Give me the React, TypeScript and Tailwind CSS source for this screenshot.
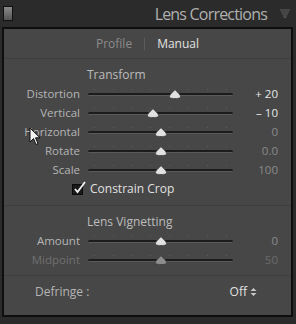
import React from "react";

const font = { fontFamily: '"Open Sans", "Noto Sans", sans-serif' };

function Thumb({ dim }: { dim?: boolean }) {
  return (
    <svg width="12" height="10" viewBox="0 0 12 10" className="block">
      <path
        d="M6 0.5 C7 2.5 11.5 5 11.5 7.5 C11.5 9 10 9.5 6 9.5 C2 9.5 0.5 9 0.5 7.5 C0.5 5 5 2.5 6 0.5 Z"
        fill={dim ? "#8e8e8e" : "#e2e2e2"}
        stroke={dim ? "#3a3a3a" : "#333"}
        strokeWidth="0.7"
      />
    </svg>
  );
}

function Slider({ pct, dim }: { pct: number; dim?: boolean }) {
  const ticks = [4, 17, 30, 43, 56, 69, 82, 95];
  return (
    <div className="relative w-[145px] h-[12px]">
      {ticks.map((t) => (
        <div
          key={t}
          className="absolute top-[1px] w-[1px] h-[1px] bg-[#5e5e5e]"
          style={{ left: `${t}%` }}
        />
      ))}
      <div className="absolute left-0 right-0 top-[5px] h-[3px] rounded-full bg-[#1c1c1c] border-b border-[#5a5a5a]" />
      <div className="absolute top-[1px]" style={{ left: `calc(${pct}% - 6px)` }}>
        <Thumb dim={dim} />
      </div>
    </div>
  );
}

function Row({
  label,
  pct,
  value,
  valueColor,
  labelColor = "text-[#b5b5b5]",
  dim,
}: {
  label: string;
  pct: number;
  value: string;
  valueColor: string;
  labelColor?: string;
  dim?: boolean;
}) {
  return (
    <div className="flex items-center h-[19px]">
      <div className={`w-[76px] text-right text-[11.5px] ${labelColor}`}>{label}</div>
      <div className="ml-[8px]">
        <Slider pct={pct} dim={dim} />
      </div>
      <div className={`w-[45px] text-right text-[11.5px] ${valueColor}`}>{value}</div>
    </div>
  );
}

export default function App() {
  return (
    <div className="relative w-[296px] h-[324px] bg-[#2b2b2b] overflow-hidden" style={font}>
      {/* header */}
      <div className="h-[27px] flex items-center">
        <div className="ml-[3px] w-[10px] h-[15px] border border-[#111] bg-gradient-to-b from-[#8a8a8a] to-[#555]" />
        <div className="flex-1 text-right text-[16px] tracking-[-0.8px] text-[#b0b0b0] pr-[13px] leading-none">
          Lens Corrections
        </div>
        <svg width="10" height="9" viewBox="0 0 10 9" className="mr-[6px]">
          {[
            [1, 1], [3, 1], [5, 1], [7, 1], [9, 1],
            [2, 3], [4, 3], [6, 3], [8, 3],
            [3, 5], [5, 5], [7, 5],
            [4, 7], [6, 7],
            [5, 8.5],
          ].map(([x, y], i) => (
            <rect key={i} x={x - 0.4} y={y - 0.4} width="0.8" height="0.8" fill="#cfcfcf" />
          ))}
        </svg>
      </div>

      {/* panel */}
      <div className="ml-[2px] w-[291px] h-[290px] border-2 border-[#0e0e0e] bg-[#474747] flex flex-col">
        {/* tabs */}
        <div className="h-[30px] flex items-center justify-center text-[12px] border-b border-[#3e3e3e]">
          <span className="text-[#8c8c8c]">Profile</span>
          <span className="mx-[12px] w-[1px] h-[12px] bg-[#5c5c5c]" />
          <span className="text-[#e2e2e2]">Manual</span>
        </div>

        <div className="pt-[7px]">
          <div className="text-[12px] text-[#bcbcbc] pl-[83px]">Transform</div>
          <div>
            <Row label="Distortion" pct={60} value="+ 20" valueColor="text-[#e8e8e8]" />
            <Row label="Vertical" pct={45} value="– 10" valueColor="text-[#e8e8e8]" />
            <Row label="Horizontal" pct={50} value="0" valueColor="text-[#8a8a8a]" />
            <Row label="Rotate" pct={50} value="0.0" valueColor="text-[#8a8a8a]" />
            <Row label="Scale" pct={50} value="100" valueColor="text-[#8a8a8a]" />
          </div>
          <div className="flex items-center h-[20px] ml-[68px]">
            <div className="relative w-[11px] h-[11px] bg-[#1a1a1a] border border-[#0a0a0a]">
              <svg width="14" height="14" viewBox="0 0 14 14" className="absolute -top-[4px] left-0">
                <path d="M2 8 L4.5 11 L12 1" fill="none" stroke="#f0f0f0" strokeWidth="1.8" />
              </svg>
            </div>
            <span className="ml-[7px] text-[12px] text-[#e0e0e0]">Constrain Crop</span>
          </div>
        </div>

        <div className="mt-[6px] border-t border-[#3e3e3e]" />

        <div className="pt-[7px]">
          <div className="text-[12px] text-[#bcbcbc] pl-[83px]">Lens Vignetting</div>
          <Row label="Amount" pct={50} value="0" valueColor="text-[#8a8a8a]" />
          <Row
            label="Midpoint"
            pct={50}
            value="50"
            valueColor="text-[#6a6a6a]"
            labelColor="text-[#707070]"
            dim
          />
        </div>

        <div className="mt-[6px] border-t border-[#3e3e3e]" />

        <div className="flex items-center h-[32px] text-[12px]">
          <span className="ml-[31px] text-[#b5b5b5]">Defringe :</span>
          <span className="ml-auto mr-[34px] text-[#e0e0e0] flex items-center">
            Off
            <svg width="7" height="10" viewBox="0 0 7 10" className="ml-[3px]">
              <path d="M0.5 4 L3.5 1 L6.5 4 Z M0.5 6 L3.5 9 L6.5 6 Z" fill="#c8c8c8" />
            </svg>
          </span>
        </div>
      </div>

      {/* mouse cursor */}
      <svg width="13" height="19" viewBox="0 0 13 19" className="absolute left-[29px] top-[127px]">
        <path
          d="M1 1 L1 15 L4.5 11.5 L7 17.5 L9 16.6 L6.5 10.8 L11 10.8 Z"
          fill="#f2f2f2"
          stroke="#111"
          strokeWidth="1"
          strokeLinejoin="round"
        />
      </svg>
    </div>
  );
}
